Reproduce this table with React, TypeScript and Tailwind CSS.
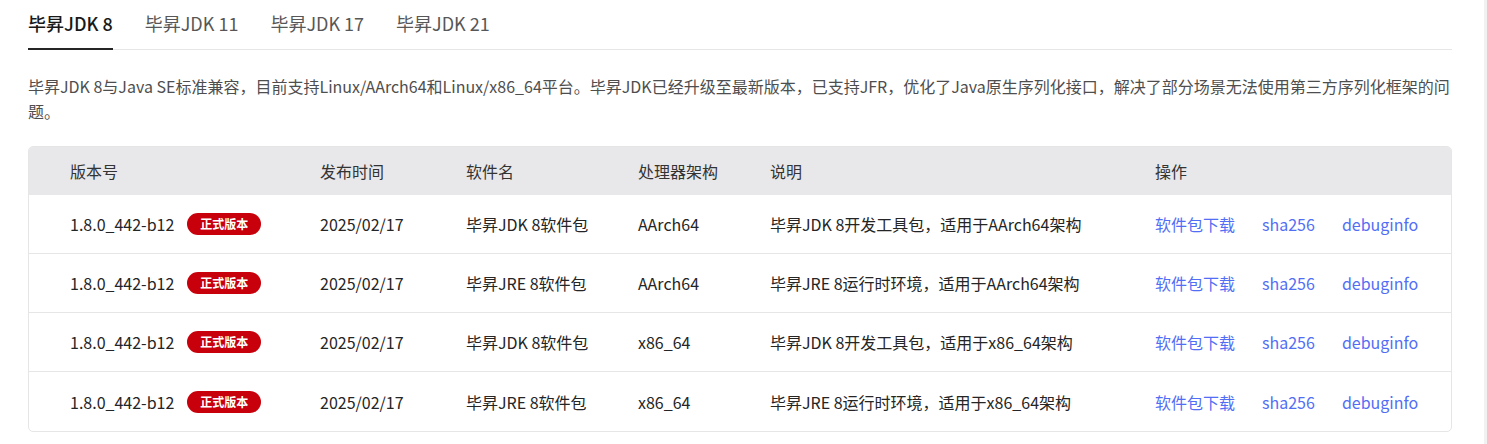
const tabs = ["毕昇JDK 8", "毕昇JDK 11", "毕昇JDK 17", "毕昇JDK 21"];

const rows = [
  { ver: "1.8.0_442-b12", date: "2025/02/17", name: "毕昇JDK 8软件包", arch: "AArch64", desc: "毕昇JDK 8开发工具包，适用于AArch64架构" },
  { ver: "1.8.0_442-b12", date: "2025/02/17", name: "毕昇JRE 8软件包", arch: "AArch64", desc: "毕昇JRE 8运行时环境，适用于AArch64架构" },
  { ver: "1.8.0_442-b12", date: "2025/02/17", name: "毕昇JDK 8软件包", arch: "x86_64", desc: "毕昇JDK 8开发工具包，适用于x86_64架构" },
  { ver: "1.8.0_442-b12", date: "2025/02/17", name: "毕昇JRE 8软件包", arch: "x86_64", desc: "毕昇JRE 8运行时环境，适用于x86_64架构" },
];

const cols = "grid grid-cols-[250px_146px_172px_132px_385px_1fr] items-center pl-[41px]";

export default function App() {
  return (
    <div
      className="flex min-h-[444px] w-full bg-white text-[#252b3a]"
      style={{ fontFamily: '"Noto Sans CJK SC", "Noto Sans", sans-serif' }}
    >
      <div className="flex-1 pl-[28px] pr-[32px]">
        {/* tabs */}
        <div className="flex gap-[32px] border-b border-[#e6e6e6]">
          {tabs.map((t, i) => (
            <div
              key={t}
              className={`-mb-px flex h-[50px] items-center border-b-2 pb-px text-[18px] ${
                i === 0
                  ? "border-[#252525] font-medium text-[#191919]"
                  : "border-transparent text-[#575757]"
              }`}
            >
              {t}
            </div>
          ))}
        </div>

        <p className="mt-[24px] text-[16px] leading-[25px] text-[#4e4e4e]">
          毕昇JDK 8与Java SE标准兼容，目前支持Linux/AArch64和Linux/x86_64平台。毕昇JDK已经升级至最新版本，已支持JFR，优化了Java原生序列化接口，解决了部分场景无法使用第三方序列化框架的问题。
        </p>

        {/* table */}
        <div className="mt-[22px] overflow-hidden rounded-[5px] border border-[#e6e6e6] text-[16px] text-[#252525]">
          <div className={`${cols} h-[48px] bg-[#e8e8ea] text-[#333]`}>
            <div>版本号</div>
            <div>发布时间</div>
            <div>软件名</div>
            <div>处理器架构</div>
            <div>说明</div>
            <div>操作</div>
          </div>
          {rows.map((r, i) => (
            <div
              key={i}
              className={`${cols} h-[59px] ${i < rows.length - 1 ? "border-b border-[#e6e6e6]" : ""}`}
            >
              <div className="flex items-center gap-[13px]">
                <span>{r.ver}</span>
                <span className="flex h-[22px] w-[74px] items-center justify-center rounded-full bg-[#c7000b] text-[12px] font-bold text-white">
                  正式版本
                </span>
              </div>
              <div>{r.date}</div>
              <div>{r.name}</div>
              <div>{r.arch}</div>
              <div>{r.desc}</div>
              <div className="flex gap-[27px] text-[#526ef5]">
                <span>软件包下载</span>
                <span>sha256</span>
                <span>debuginfo</span>
              </div>
            </div>
          ))}
        </div>
      </div>
      <div className="w-[3px] bg-[#f1f1f1]" />
    </div>
  );
}
